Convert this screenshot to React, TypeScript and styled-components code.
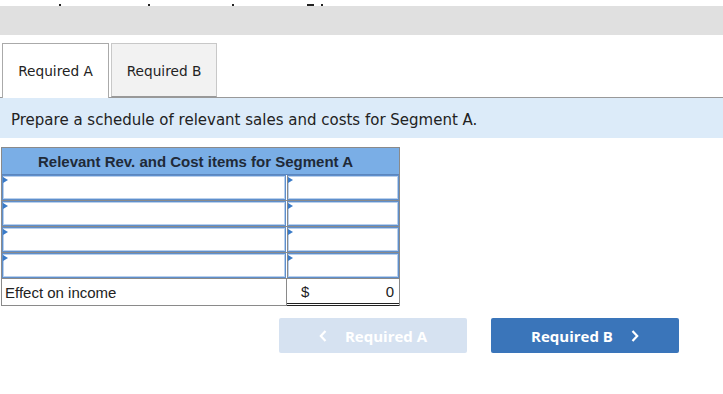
import React from "react";
import styled, { createGlobalStyle } from "styled-components";

const Global = createGlobalStyle`
  html, body { margin: 0; padding: 0; background: #fff; }
  body { font-family: "DejaVu Sans", Verdana, sans-serif; }
`;

const Page = styled.div`
  width: 723px;
  height: 394px;
  display: flex;
  flex-direction: column;
  overflow: hidden;
`;

const TopStrip = styled.div`
  height: 6px;
  display: flex;
  align-items: flex-end;
`;

const Tick = styled.span<{ $left: number; $w?: number }>`
  display: block;
  margin-left: ${(p) => p.$left}px;
  width: ${(p) => p.$w ?? 2}px;
  height: 2px;
  background: #222;
`;

const GrayBar = styled.div`
  height: 29px;
  background: #e0e0e0;
`;

const TabRow = styled.div`
  margin-top: 8px;
  display: flex;
  align-items: flex-end;
  gap: 2px;
  padding-left: 2px;
  border-bottom: 1px solid #999;
  height: 54px;
`;

const Tab = styled.div<{ $active?: boolean }>`
  box-sizing: border-box;
  height: ${(p) => (p.$active ? 55 : 54)}px;
  margin-bottom: ${(p) => (p.$active ? -1 : 0)}px;
  width: ${(p) => (p.$active ? 107 : 106)}px;
  display: flex;
  align-items: center;
  justify-content: center;
  font-size: 13.7px;
  color: #222;
  background: ${(p) => (p.$active ? "#fff" : "#f2f2f2")};
  border: 1px solid ${(p) => (p.$active ? "#aaa" : "#c8c8c8")};
  border-bottom: ${(p) => (p.$active ? "none" : "1px solid #999")};
  padding-top: ${(p) => (p.$active ? 0 : 1)}px;
`;

const Instruction = styled.div`
  box-sizing: border-box;
  height: 40px;
  background: #dcebf9;
  display: flex;
  align-items: center;
  padding: 3px 0 0 11px;
  font-size: 15px;
  color: #222;
`;

const Table = styled.div`
  margin: 9px 0 0 1px;
  width: 399px;
  border: 1px solid #8a8a8a;
  border-bottom: none;
  box-sizing: border-box;
  font-family: "Liberation Sans", Arial, sans-serif;
`;

const HeaderRow = styled.div`
  height: 26px;
  background: #7aaee6;
  display: flex;
  align-items: center;
  justify-content: center;
  padding-right: 10px;
  font-weight: bold;
  font-size: 15px;
  color: #1f2a38;
  border-bottom: 1px solid #5c86bd;
`;

const Row = styled.div`
  box-sizing: border-box;
  display: grid;
  grid-template-columns: 285px 1fr;
  height: 26px;
  border-bottom: 1px solid #8a8a8a;
`;

const InputCell = styled.div<{ $right?: boolean }>`
  position: relative;
  box-sizing: border-box;
  background: #fff;
  border: 1px solid #5f8fcc;
  box-shadow: inset 0 0 0 1px #b9d0ec;
  margin: 0 ${(p) => (p.$right ? 0 : 1)}px 0 0;
  border-left: ${(p) => (p.$right ? "1px solid #8a8a8a" : "1px solid #5f8fcc")};
`;

const Marker = styled.span`
  position: absolute;
  left: 0;
  top: 1px;
  width: 0;
  height: 0;
  border-top: 3px solid transparent;
  border-bottom: 3px solid transparent;
  border-left: 5px solid #3a7bc8;
`;

const LabelCell = styled.div`
  display: flex;
  align-items: center;
  padding-left: 3px;
  font-size: 15px;
  color: #222;
  border-right: 1px solid #8a8a8a;
  border-bottom: 1px solid #8a8a8a;
`;

const AmountCell = styled.div`
  display: flex;
  align-items: center;
  justify-content: space-between;
  padding: 0 5px 0 14px;
  font-size: 15px;
  color: #222;
  border-bottom: 3px double #222;
`;

const LastRow = styled.div`
  display: grid;
  grid-template-columns: 285px 1fr;
  height: 27px;
`;

const Buttons = styled.div`
  margin-top: 12px;
  display: flex;
  justify-content: flex-end;
  gap: 24px;
  padding-right: 44px;
`;

const NavButton = styled.button<{ $disabled?: boolean }>`
  width: 188px;
  height: 35px;
  padding: 0;
  border: none;
  border-radius: 2px;
  display: flex;
  align-items: center;
  justify-content: center;
  gap: 18px;
  font-family: "Open Sans", Lato, sans-serif;
  font-weight: bold;
  font-size: 15px;
  color: #fff;
  background: ${(p) => (p.$disabled ? "#d6e2f1" : "#3a75ba")};
  cursor: ${(p) => (p.$disabled ? "default" : "pointer")};
`;

const Chevron = ({ dir }: { dir: "left" | "right" }) => (
  <svg width="8" height="12" viewBox="0 0 8 12">
    <path
      d={dir === "left" ? "M6.5 1 L1.8 6 L6.5 11" : "M1.5 1 L6.2 6 L1.5 11"}
      fill="none"
      stroke="#fff"
      strokeWidth="2.2"
    />
  </svg>
);

const inputRows = [0, 1, 2, 3];

export default function App() {
  return (
    <Page>
      <Global />
      <TopStrip>
        <Tick $left={59} />
        <Tick $left={87} />
        <Tick $left={82} />
        <Tick $left={73} $w={7} />
        <Tick $left={7} />
      </TopStrip>
      <GrayBar />
      <TabRow>
        <Tab $active>Required A</Tab>
        <Tab>Required B</Tab>
      </TabRow>
      <Instruction>Prepare a schedule of relevant sales and costs for Segment A.</Instruction>
      <Table>
        <HeaderRow>Relevant Rev. and Cost items for Segment A</HeaderRow>
        {inputRows.map((r) => (
          <Row key={r}>
            <InputCell>
              <Marker />
            </InputCell>
            <InputCell $right>
              <Marker />
            </InputCell>
          </Row>
        ))}
        <LastRow>
          <LabelCell>Effect on income</LabelCell>
          <AmountCell>
            <span>$</span>
            <span>0</span>
          </AmountCell>
        </LastRow>
      </Table>
      <Buttons>
        <NavButton $disabled>
          <Chevron dir="left" />
          Required A
        </NavButton>
        <NavButton>
          Required B
          <Chevron dir="right" />
        </NavButton>
      </Buttons>
    </Page>
  );
}
